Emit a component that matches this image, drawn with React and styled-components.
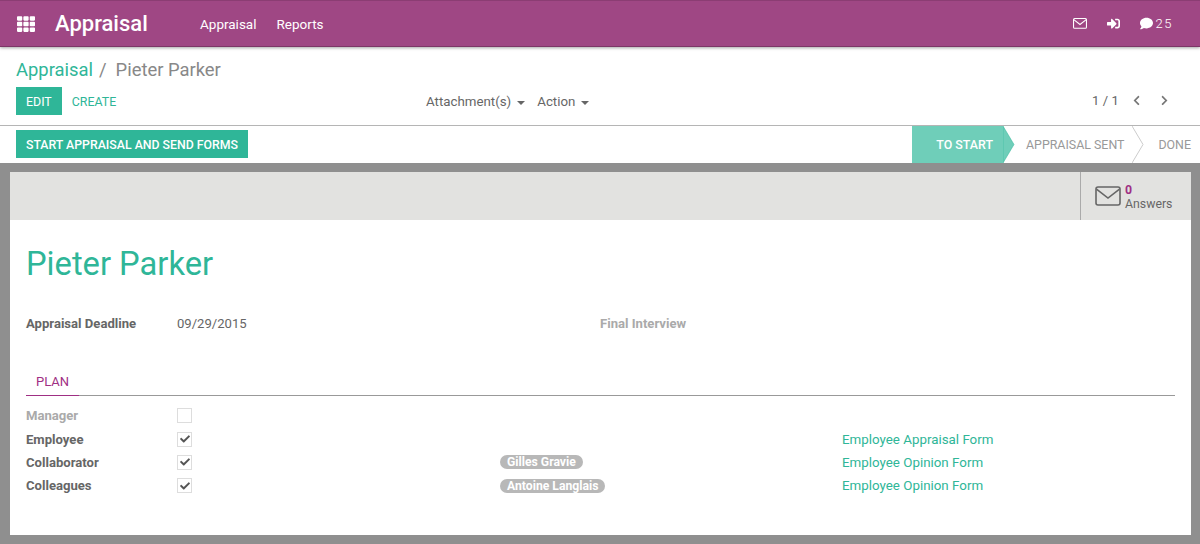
import React from 'react';
import styled, { createGlobalStyle } from 'styled-components';
import { FaTh, FaSignInAlt, FaComment, FaChevronLeft, FaChevronRight, FaCheck } from 'react-icons/fa';

const GlobalStyle = createGlobalStyle`
  html, body {
    margin: 0;
    padding: 0;
    height: 544px;
    overflow: hidden;
    background: #fff;
    font-family: Roboto, "Liberation Sans", sans-serif;
    color: #666;
  }
  * {
    box-sizing: border-box;
  }
`;

const Page = styled.div`
  height: 544px;
  display: flex;
  flex-direction: column;
`;

const Navbar = styled.header`
  height: 47px;
  flex: none;
  display: flex;
  align-items: center;
  background: #9f4784;
  border-top: 1px solid #8b3d73;
  border-bottom: 1px solid #7c3767;
  box-shadow: 0 1px 3px rgba(0, 0, 0, 0.35);
  color: #fff;
  position: relative;
  z-index: 1;
`;

const Apps = styled.div`
  width: 55px;
  padding-left: 17px;
  display: flex;
  font-size: 18px;
`;

const Brand = styled.div`
  width: 145px;
  font-size: 22px;
  font-weight: 500;
`;

const NavLink = styled.a`
  font-size: 13.5px;
  margin-right: 20px;
`;

const NavRight = styled.div`
  margin-left: auto;
  padding-right: 27px;
  display: flex;
  align-items: center;
  gap: 20px;
  font-size: 13px;
`;

const Messages = styled.span`
  display: flex;
  align-items: center;
  gap: 3px;
  font-weight: 300;
  letter-spacing: 1.5px;
`;

const ControlPanel = styled.section`
  height: 79px;
  flex: none;
  padding: 12px 16px 0;
  border-bottom: 1px solid #b5b5b5;
`;

const Breadcrumb = styled.div`
  font-size: 18.4px;
  line-height: 22px;
  color: #888;
  display: flex;
  gap: 6px;
`;

const Crumb = styled.a`
  color: #2fb698;
`;

const Slash = styled.span`
  margin-right: 3px;
`;

const ControlRow = styled.div`
  display: grid;
  grid-template-columns: 410px 1fr auto;
  align-items: center;
  margin-top: 6px;
  height: 28px;
`;

const ButtonGroup = styled.div`
  display: flex;
  align-items: center;
`;

const PrimaryButton = styled.button`
  height: 28px;
  padding: 0 10px;
  border: 0;
  background: #2fb698;
  color: #fff;
  font-family: inherit;
  font-size: 12.4px;
`;

const LinkButton = styled.a`
  margin-left: 10px;
  padding-top: 1px;
  font-size: 12.4px;
  color: #2fb698;
`;

const Menus = styled.div`
  margin-top: -1px;
`;

const Dropdown = styled.span`
  display: inline-flex;
  align-items: center;
  font-size: 13.3px;
  color: #666;
  margin-right: 12px;
  &::after {
    content: '';
    margin-left: 6px;
    margin-top: 2px;
    border-left: 4px solid transparent;
    border-right: 4px solid transparent;
    border-top: 4px solid #666;
  }
`;

const Pager = styled.div`
  display: flex;
  align-items: center;
  font-size: 13px;
  letter-spacing: 0.1px;
  padding-right: 14px;
  margin-top: -2px;
  color: #666;
`;

const PagerArrow = styled.span`
  display: flex;
  font-size: 11px;
  color: #777;
  margin-left: ${p => p.$gap}px;
  margin-top: 1px;
`;

const StatusBar = styled.section`
  height: 37px;
  flex: none;
  padding-left: 16px;
  display: flex;
  align-items: center;
  justify-content: space-between;
`;

const WideButton = styled(PrimaryButton)`
  font-weight: 500;
  font-size: 12.3px;
  padding: 1px 10px 0;
  margin-top: -1px;
`;

const Steps = styled.div`
  display: flex;
  align-self: stretch;
`;

const Step = styled.div`
  position: relative;
  display: flex;
  align-items: center;
  height: 100%;
  font-size: 12.4px;
  padding: ${p => p.$pad};
  color: ${p => (p.$active ? '#fff' : '#999')};
  background: ${p => (p.$active ? '#6fceb9' : 'transparent')};
  font-weight: ${p => (p.$active ? 500 : 400)};
`;

const StepArrow = styled.svg`
  position: absolute;
  top: 0;
  left: 100%;
  width: 12px;
  height: 37px;
  z-index: 1;
`;

const Canvas = styled.main`
  flex: 1;
  background: #8f8f8f;
  padding: 9px 9px 9px 10px;
  min-height: 0;
`;

const Sheet = styled.article`
  height: 100%;
  background: #fff;
`;

const ButtonBox = styled.div`
  height: 48px;
  background: #e2e2e0;
  display: flex;
  justify-content: flex-end;
`;

const StatButton = styled.div`
  width: 111px;
  border-left: 1px solid #aaa;
  display: flex;
  align-items: center;
  padding-left: 14px;
  gap: 4px;
`;

const StatText = styled.div`
  display: flex;
  flex-direction: column;
  font-size: 12.3px;
  line-height: 14px;
  padding-top: 2px;
  color: #666;
`;

const StatValue = styled.b`
  color: #9f2f84;
`;

const SheetBody = styled.div`
  padding: 0 16px;
`;

const Title = styled.h1`
  margin: 25px 0 0;
  font-size: 32.7px;
  line-height: 38px;
  font-weight: 400;
  color: #2fb698;
`;

const InfoRow = styled.div`
  margin-top: 32px;
  display: grid;
  grid-template-columns: 151px 423px 1fr;
  font-size: 13.1px;
  line-height: 18px;
`;

const Label = styled.span`
  font-weight: 700;
  color: ${p => (p.$muted ? '#aaa' : '#666')};
`;

const Tabs = styled.div`
  margin-top: 34px;
  height: 29px;
  border-bottom: 1px solid #999;
  display: flex;
`;

const Tab = styled.a`
  width: 53px;
  padding-left: 10px;
  height: 29px;
  font-size: 13px;
  line-height: 30px;
  color: #9f2f84;
  border-bottom: 1px solid #9f2f84;
`;

const PlanRows = styled.div`
  margin-top: 8px;
`;

const PlanRow = styled.div`
  display: grid;
  grid-template-columns: 151px 323px 342px 1fr;
  align-items: center;
  height: 23.4px;
  font-size: 13.1px;
`;

const Checkbox = styled.span`
  width: 15px;
  height: 15px;
  border: 1px solid #ddd;
  display: flex;
  align-items: center;
  justify-content: center;
  font-size: 10px;
  color: #555;
`;

const Tag = styled.span`
  justify-self: start;
  height: 18px;
  padding: 0 7px;
  border-radius: 9px;
  background: #b8b8b8;
  color: #fff;
  font-size: 12.2px;
  font-weight: 700;
  line-height: 18px;
`;

const FormLink = styled.a`
  color: #2fb698;
  font-size: 13.35px;
`;

const EnvelopeIcon = ({ color, size, line }) => (
  <svg width={size} height={size * 0.77} viewBox="0 0 26 20" fill="none" stroke={color} strokeWidth={line}>
    <rect x="1" y="1" width="24" height="18" rx="2" />
    <path d="M1.5 3l11.5 9 11.5-9" />
  </svg>
);

const planRows = [
  { name: 'Manager', muted: true },
  { name: 'Employee', checked: true, form: 'Employee Appraisal Form' },
  { name: 'Collaborator', checked: true, tag: 'Gilles Gravie', form: 'Employee Opinion Form' },
  { name: 'Colleagues', checked: true, tag: 'Antoine Langlais', form: 'Employee Opinion Form' },
];

const App = () => {
  return (
    <Page>
      <GlobalStyle />
      <Navbar>
        <Apps>
          <FaTh />
        </Apps>
        <Brand>Appraisal</Brand>
        <NavLink>Appraisal</NavLink>
        <NavLink>Reports</NavLink>
        <NavRight>
          <EnvelopeIcon color="#fff" size={14} line={2} />
          <FaSignInAlt />
          <Messages>
            <FaComment size={13} />
            25
          </Messages>
        </NavRight>
      </Navbar>
      <ControlPanel>
        <Breadcrumb>
          <Crumb>Appraisal</Crumb>
          <Slash>/</Slash>
          <span>Pieter Parker</span>
        </Breadcrumb>
        <ControlRow>
          <ButtonGroup>
            <PrimaryButton>EDIT</PrimaryButton>
            <LinkButton>CREATE</LinkButton>
          </ButtonGroup>
          <Menus>
            <Dropdown>Attachment(s)</Dropdown>
            <Dropdown>Action</Dropdown>
          </Menus>
          <Pager>
            1 / 1
            <PagerArrow $gap={12}>
              <FaChevronLeft />
            </PagerArrow>
            <PagerArrow $gap={17}>
              <FaChevronRight />
            </PagerArrow>
          </Pager>
        </ControlRow>
      </ControlPanel>
      <StatusBar>
        <WideButton>START APPRAISAL AND SEND FORMS</WideButton>
        <Steps>
          <Step $active $pad="0 10px 0 24px">
            TO START
            <StepArrow viewBox="0 0 12 37">
              <path d="M0 0l11 18.5L0 37z" fill="#6fceb9" stroke="#2fb698" strokeWidth="0.5" />
            </StepArrow>
          </Step>
          <Step $pad="0 8px 0 23px">
            APPRAISAL SENT
            <StepArrow viewBox="0 0 12 37">
              <path d="M0 0l11 18.5L0 37" fill="none" stroke="#ccc" />
            </StepArrow>
          </Step>
          <Step $pad="0 9px 0 26px">DONE</Step>
        </Steps>
      </StatusBar>
      <Canvas>
        <Sheet>
          <ButtonBox>
            <StatButton>
              <EnvelopeIcon color="#666" size={26} line={1.6} />
              <StatText>
                <StatValue>0</StatValue>
                Answers
              </StatText>
            </StatButton>
          </ButtonBox>
          <SheetBody>
            <Title>Pieter Parker</Title>
            <InfoRow>
              <Label>Appraisal Deadline</Label>
              <span>09/29/2015</span>
              <Label $muted>Final Interview</Label>
            </InfoRow>
            <Tabs>
              <Tab>PLAN</Tab>
            </Tabs>
            <PlanRows>
              {planRows.map(row => (
                <PlanRow key={row.name}>
                  <Label $muted={row.muted}>{row.name}</Label>
                  <Checkbox>{row.checked && <FaCheck />}</Checkbox>
                  <span>{row.tag && <Tag>{row.tag}</Tag>}</span>
                  <FormLink>{row.form}</FormLink>
                </PlanRow>
              ))}
            </PlanRows>
          </SheetBody>
        </Sheet>
      </Canvas>
    </Page>
  );
};

export default App;
